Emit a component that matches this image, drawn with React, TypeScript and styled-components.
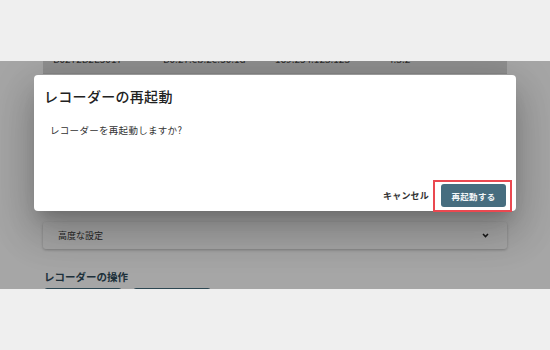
import React from 'react';
import styled, { createGlobalStyle } from 'styled-components';

const GlobalStyle = createGlobalStyle`
  html, body {
    margin: 0;
    padding: 0;
    background: #efefef;
    font-family: "Noto Sans CJK JP", "Noto Sans", sans-serif;
  }
`;

const Frame = styled.div`
  width: 550px;
  height: 350px;
  display: flex;
  flex-direction: column;
`;

const Band = styled.div<{ h: number }>`
  height: ${({ h }) => h}px;
  background: #efefef;
  flex-shrink: 0;
`;

const Screen = styled.div`
  position: relative;
  height: 228px;
  overflow: hidden;
  background: #ffffff;
`;

// page is scrolled a little, so the last table row is only partly in view
const Page = styled.div`
  margin-top: -17px;
  padding: 0 43px;
`;

const TableRow = styled.div`
  display: grid;
  grid-template-columns: 110px 112px 113px 1fr;
  align-items: center;
  height: 29px;
  padding-left: 10px;
  background: #dcdcdc;
  border-bottom: 1px solid #cfcfcf;
  font-size: 10px;
  color: #444;
`;

const Accordion = styled.div`
  margin-top: 148px;
  height: 27px;
  display: flex;
  align-items: center;
  justify-content: space-between;
  padding: 0 18px 0 15px;
  background: #fff;
  border-radius: 3px;
  box-shadow: 0 1px 3px rgba(0, 0, 0, 0.25);
  font-size: 9px;
  color: #3a3a3a;
`;

const SectionTitle = styled.div`
  margin-top: 21px;
  margin-left: 1px;
  font-size: 10.5px;
  line-height: 14px;
  font-weight: 700;
  color: #2f4b5a;
`;

const ActionRow = styled.div`
  display: flex;
  gap: 11px;
  margin-top: 4px;
  margin-left: 1px;
`;

const OutlineButton = styled.div`
  width: 78px;
  height: 28px;
  border: 1px solid #466d7f;
  border-radius: 3px;
  box-sizing: border-box;
`;

const Overlay = styled.div`
  position: absolute;
  inset: 0;
  background: rgba(0, 0, 0, 0.35);
  display: flex;
  justify-content: center;
  align-items: flex-start;
  padding-top: 14px;
`;

const Dialog = styled.div`
  width: 482px;
  height: 136px;
  background: #fff;
  border-radius: 4px;
  display: flex;
  flex-direction: column;
  box-shadow: 0 11px 15px -7px rgba(0, 0, 0, 0.2), 0 24px 38px 3px rgba(0, 0, 0, 0.14),
    0 9px 46px 8px rgba(0, 0, 0, 0.12);
`;

const DialogTitle = styled.h2`
  margin: 0;
  padding: 11px 10px 0;
  font-size: 14px;
  line-height: 21px;
  font-weight: 500;
  letter-spacing: 0.3px;
  color: #212121;
`;

const DialogBody = styled.p`
  margin: 16px 0 0;
  padding: 0 16px;
  font-size: 9.5px;
  line-height: 14px;
  letter-spacing: 0.3px;
  color: #333;
`;

const DialogActions = styled.div`
  margin-top: auto;
  display: flex;
  justify-content: flex-end;
  align-items: center;
  gap: 6px;
  padding: 0 10px 4px;
`;

const TextButton = styled.button`
  height: 23px;
  padding: 0 6px;
  border: none;
  background: transparent;
  font-family: inherit;
  font-size: 9px;
  font-weight: 700;
  letter-spacing: 0.2px;
  color: #333;
`;

const Highlight = styled.span`
  position: relative;
  display: inline-flex;

  &::after {
    content: '';
    position: absolute;
    inset: -4px -6px -5px -8px;
    border: 2px solid #ea4850;
    pointer-events: none;
  }
`;

const PrimaryButton = styled.button`
  width: 65px;
  height: 23px;
  padding: 0;
  border: none;
  border-radius: 3px;
  background: #466d7f;
  font-family: inherit;
  font-size: 8.5px;
  font-weight: 700;
  letter-spacing: 0.3px;
  color: #f1f5f7;
`;

const Chevron = () => (
  <svg width="7" height="5" viewBox="0 0 7 5">
    <path d="M1 1 L3.5 3.6 L6 1" fill="none" stroke="#222" strokeWidth="1.5" />
  </svg>
);

export default function App() {
  return (
    <>
      <GlobalStyle />
      <Frame>
        <Band h={61} />
        <Screen>
          <Page>
            <TableRow>
              <span>B0272B2E5017</span>
              <span>B0:27:eb:2e:50:1d</span>
              <span>169.254.123.123</span>
              <span>4.3.2</span>
            </TableRow>
            <Accordion>
              <span>高度な設定</span>
              <Chevron />
            </Accordion>
            <SectionTitle>レコーダーの操作</SectionTitle>
            <ActionRow>
              <OutlineButton />
              <OutlineButton />
            </ActionRow>
          </Page>
          <Overlay>
            <Dialog>
              <DialogTitle>レコーダーの再起動</DialogTitle>
              <DialogBody>レコーダーを再起動しますか?</DialogBody>
              <DialogActions>
                <TextButton>キャンセル</TextButton>
                <Highlight>
                  <PrimaryButton>再起動する</PrimaryButton>
                </Highlight>
              </DialogActions>
            </Dialog>
          </Overlay>
        </Screen>
        <Band h={61} />
      </Frame>
    </>
  );
}
